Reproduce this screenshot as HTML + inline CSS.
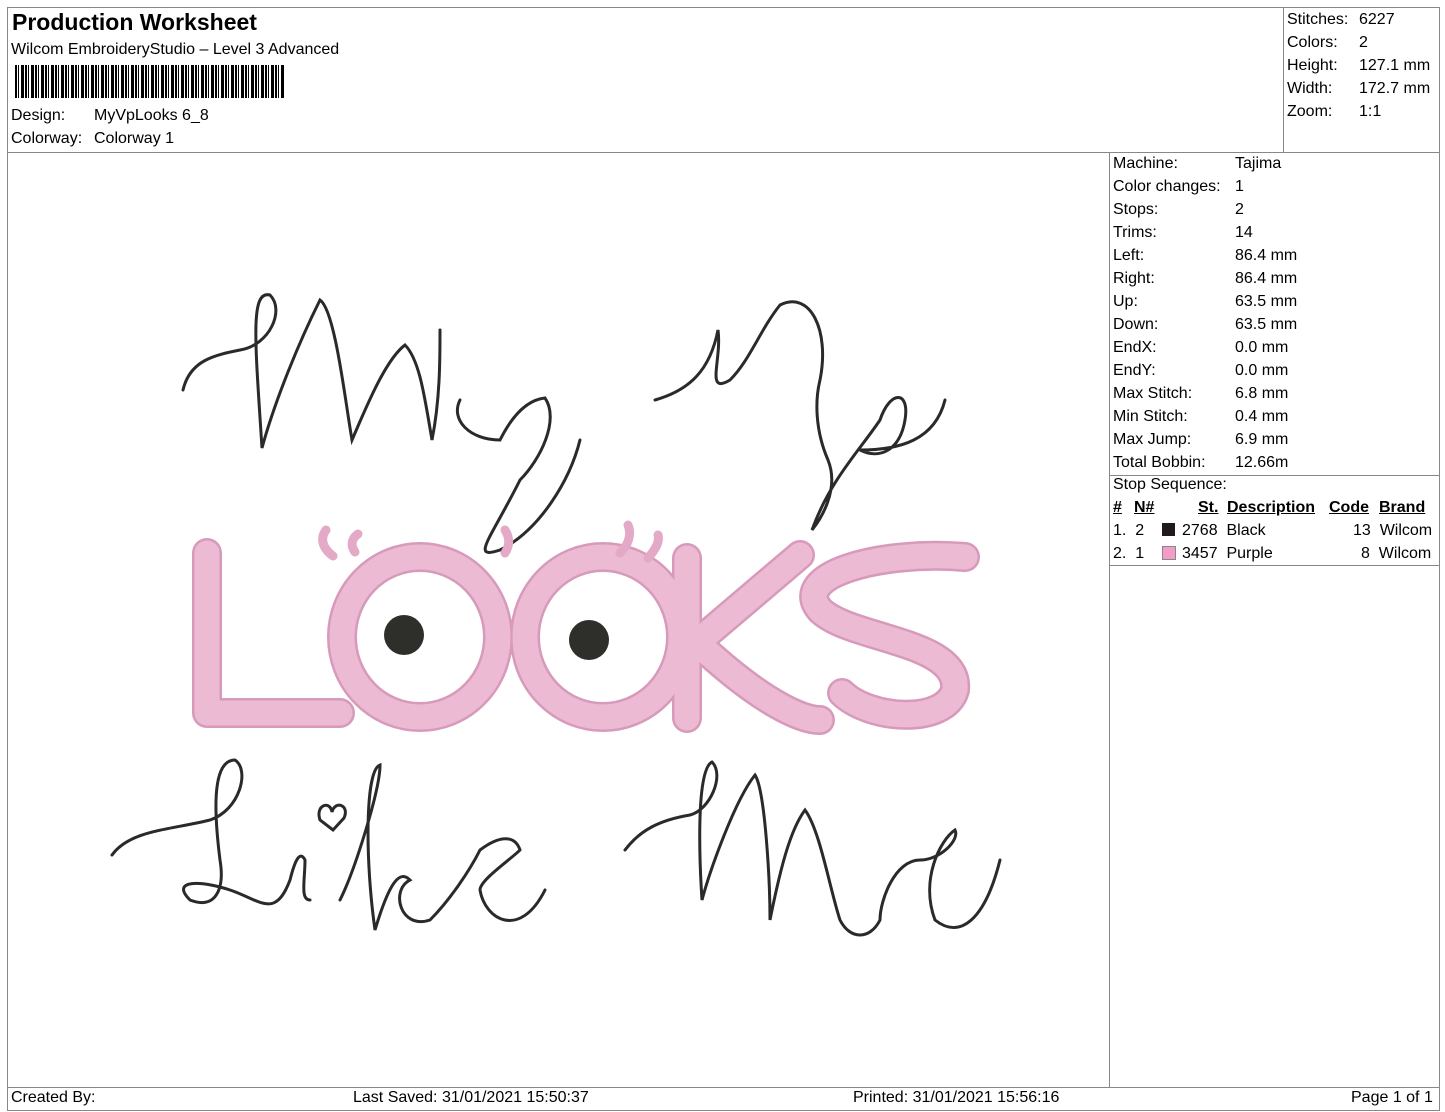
<!DOCTYPE html>
<html><head><meta charset="utf-8"><style>
body{margin:0;background:#fff;font-family:"Liberation Sans",sans-serif;color:#000}
.p{position:absolute;font-size:16px;white-space:nowrap}
.l{position:absolute;background:#888}
</style></head><body>
<div style="position:relative;width:1445px;height:1112px;overflow:hidden">
<div class="l" style="left:7px;top:7px;width:1433px;height:1px"></div>
<div class="l" style="left:7px;top:7px;width:1px;height:1104px"></div>
<div class="l" style="left:1439px;top:7px;width:1px;height:1104px"></div>
<div class="l" style="left:7px;top:152px;width:1433px;height:1px"></div>
<div class="l" style="left:1283px;top:7px;width:1px;height:145px"></div>
<div class="l" style="left:1109px;top:152px;width:1px;height:935px"></div>
<div class="l" style="left:1109px;top:475px;width:331px;height:1px"></div>
<div class="l" style="left:1109px;top:565px;width:331px;height:1px"></div>
<div class="l" style="left:7px;top:1087px;width:1433px;height:1px"></div>
<div class="l" style="left:7px;top:1110px;width:1433px;height:1px"></div>

<div class="p" style="left:12px;top:9px;font-size:23px;font-weight:bold">Production Worksheet</div>
<div class="p" style="left:11px;top:41px">Wilcom EmbroideryStudio – Level 3 Advanced</div>
<div style="position:absolute;left:15px;top:65px;width:269px;height:33px;background:repeating-linear-gradient(90deg,#000 0 2px,#fff 2px 3px,#000 3px 4px,#fff 4px 6px,#000 6px 9px,#fff 9px 10px)"></div>
<div class="p" style="left:11px;top:107px">Design:</div><div class="p" style="left:94px;top:107px">MyVpLooks 6_8</div>
<div class="p" style="left:11px;top:130px">Colorway:</div><div class="p" style="left:94px;top:130px">Colorway 1</div>

<div class="p" style="left:1287px;top:8px;line-height:23px">Stitches:<br>Colors:<br>Height:<br>Width:<br>Zoom:</div>
<div class="p" style="left:1359px;top:8px;line-height:23px">6227<br>2<br>127.1 mm<br>172.7 mm<br>1:1</div>

<div class="p" style="left:1113px;top:152px;line-height:23px">Machine:<br>Color changes:<br>Stops:<br>Trims:<br>Left:<br>Right:<br>Up:<br>Down:<br>EndX:<br>EndY:<br>Max Stitch:<br>Min Stitch:<br>Max Jump:<br>Total Bobbin:</div>
<div class="p" style="left:1235px;top:152px;line-height:23px">Tajima<br>1<br>2<br>14<br>86.4 mm<br>86.4 mm<br>63.5 mm<br>63.5 mm<br>0.0 mm<br>0.0 mm<br>6.8 mm<br>0.4 mm<br>6.9 mm<br>12.66m</div>
<div class="p" style="left:1113px;top:476px">Stop Sequence:</div>
<div class="p" style="left:1113px;top:499px;font-weight:bold;text-decoration:underline">#</div>
<div class="p" style="left:1134px;top:499px;font-weight:bold;text-decoration:underline">N#</div>
<div class="p" style="left:1198px;top:499px;font-weight:bold;text-decoration:underline">St.</div>
<div class="p" style="left:1227px;top:499px;font-weight:bold;text-decoration:underline">Description</div>
<div class="p" style="left:1329px;top:499px;font-weight:bold;text-decoration:underline">Code</div>
<div class="p" style="left:1379px;top:499px;font-weight:bold;text-decoration:underline">Brand</div>
<div class="p" style="left:1113px;top:522px">1.&nbsp; 2</div>
<div style="position:absolute;left:1162px;top:523px;width:13px;height:13px;background:#201a1c"></div>
<div class="p" style="left:1182px;top:522px">2768&nbsp; Black</div>
<div class="p" style="left:1353px;top:522px">13&nbsp; Wilcom</div>
<div class="p" style="left:1113px;top:545px">2.&nbsp; 1</div>
<div style="position:absolute;left:1162px;top:546px;width:12px;height:12px;background:#f59bc7;border:1px solid #888"></div>
<div class="p" style="left:1182px;top:545px">3457&nbsp; Purple</div>
<div class="p" style="left:1361px;top:545px">8&nbsp; Wilcom</div>

<div class="p" style="left:11px;top:1089px">Created By:</div>
<div class="p" style="left:353px;top:1089px">Last Saved: 31/01/2021 15:50:37</div>
<div class="p" style="left:853px;top:1089px">Printed: 31/01/2021 15:56:16</div>
<div class="p" style="left:1351px;top:1089px">Page 1 of 1</div>

<svg style="position:absolute;left:0;top:0" width="1445" height="1112">
<g fill="none" stroke="#2a2a2a" stroke-width="3" stroke-linecap="round">
<path d="M183 390 C190 360 215 355 240 350 C270 345 285 310 270 295 C250 290 255 340 262 448 C275 400 300 340 320 300 C335 310 345 400 352 440 C365 410 385 360 405 345 C420 360 425 400 432 440 C440 400 440 360 440 330"/>
<path d="M460 400 C450 420 470 440 500 440 C510 420 525 400 545 398 C560 420 540 460 520 480 C490 540 470 560 500 550 C540 530 570 480 580 440"/>
<path d="M655 400 C690 390 710 370 718 330 C722 360 705 395 730 380 C750 360 760 330 780 305 C810 290 830 330 820 380 C815 400 815 430 828 460 C840 490 820 520 812 530 C830 480 860 450 880 420 C890 390 910 390 905 420 C900 450 880 460 860 450 C900 450 935 440 945 400"/>
<path d="M112 855 C130 830 170 830 210 820 C240 810 250 770 235 760 C210 760 215 820 220 860 C225 890 215 910 190 900 C170 880 200 880 230 890 C260 900 275 920 290 880 C295 860 300 850 305 860 C305 880 300 900 310 900"/>
<path d="M320 820 C315 805 330 800 332 812 C335 800 350 805 344 818 L333 830 Z"/>
<path d="M340 900 C355 870 380 790 380 765 C365 770 365 860 375 930 C390 880 400 870 410 880 C390 890 400 930 430 920 C450 900 470 870 480 850 C500 835 515 835 520 850 C510 860 480 880 480 890 C485 920 520 940 545 890"/>
<path d="M625 850 C640 830 660 820 690 815 C710 810 725 775 712 762 C695 770 700 870 702 900 C710 870 735 800 755 775 C765 790 770 880 770 920 C780 870 790 830 805 810 C820 830 830 890 840 920 C850 940 870 940 880 920 C880 900 895 860 920 860 C940 860 960 840 955 830 C940 840 920 880 935 920 C960 940 985 920 1000 860"/>
</g>
<g stroke-linecap="round" stroke-linejoin="round" fill="none">
<g stroke="#d79abb" stroke-width="30">
<path d="M207 553 L207 713 L340 713"/>
<ellipse cx="420" cy="637" rx="78" ry="80"/>
<ellipse cx="603" cy="637" rx="78" ry="80"/>
<path d="M687 558 L687 718 M700 640 L800 555 M705 650 C760 700 800 720 820 720"/>
<path d="M965 557 C880 550 790 575 820 610 C850 640 960 640 955 690 C945 725 870 720 842 693"/>
</g>
<g stroke="#ecbad3" stroke-width="25">
<path d="M207 553 L207 713 L340 713"/>
<ellipse cx="420" cy="637" rx="78" ry="80"/>
<ellipse cx="603" cy="637" rx="78" ry="80"/>
<path d="M687 558 L687 718 M700 640 L800 555 M705 650 C760 700 800 720 820 720"/>
<path d="M965 557 C880 550 790 575 820 610 C850 640 960 640 955 690 C945 725 870 720 842 693"/>
</g>
<g stroke="#e3a9c6" stroke-width="9">
<path d="M333 556 C322 548 320 538 326 530 M355 552 C350 545 352 538 358 534 M505 553 C510 545 510 538 505 530 M620 553 C628 545 632 535 628 525 M648 558 C655 550 660 542 658 535"/>
</g>
</g>
<circle cx="404" cy="635" r="20" fill="#2e2e2a"/>
<circle cx="589" cy="640" r="20" fill="#2e2e2a"/>
</svg>
</div>
</body></html>
